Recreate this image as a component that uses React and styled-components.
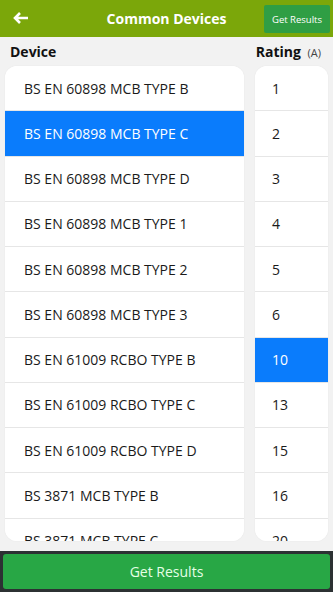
import React, { useState } from "react";
import styled, { createGlobalStyle } from "styled-components";

const GlobalStyle = createGlobalStyle`
  html, body {
    margin: 0;
    padding: 0;
    background: #f2f2f2;
    font-family: "Open Sans", "Noto Sans", sans-serif;
  }
`;

const devices = [
  "BS EN 60898 MCB TYPE B",
  "BS EN 60898 MCB TYPE C",
  "BS EN 60898 MCB TYPE D",
  "BS EN 60898 MCB TYPE 1",
  "BS EN 60898 MCB TYPE 2",
  "BS EN 60898 MCB TYPE 3",
  "BS EN 61009 RCBO TYPE B",
  "BS EN 61009 RCBO TYPE C",
  "BS EN 61009 RCBO TYPE D",
  "BS 3871 MCB TYPE B",
  "BS 3871 MCB TYPE C",
  "BS 3871 MCB TYPE D",
];

const ratings = [1, 2, 3, 4, 5, 6, 10, 13, 15, 16, 20, 25, 32];

const Page = styled.div`
  display: flex;
  flex-direction: column;
  width: 333px;
  height: 592px;
  overflow: hidden;
  background: #f2f2f2;
`;

const Header = styled.header`
  position: relative;
  display: flex;
  align-items: center;
  justify-content: center;
  height: 37px;
  background: #7ba70a;
  flex-shrink: 0;
`;

const Back = styled.span`
  position: absolute;
  left: 12px;
  top: 9px;
  display: flex;
`;

const Title = styled.h1`
  margin: 0;
  color: #ffffff;
  font-size: 14px;
  font-weight: 700;
`;

const HeadButton = styled.button`
  position: absolute;
  right: 3px;
  top: 5px;
  width: 66px;
  height: 28px;
  border: none;
  border-radius: 2px;
  background: #2f9e44;
  color: #ffffff;
  font-family: inherit;
  font-size: 9.5px;
  padding: 0;
`;

const Labels = styled.div`
  display: flex;
  justify-content: space-between;
  align-items: center;
  height: 29px;
  padding: 0 12px 0 10px;
  flex-shrink: 0;
`;

const Label = styled.span`
  font-size: 14px;
  font-weight: 700;
  color: #111;

  small {
    margin-left: 3px;
    font-size: 11px;
    font-weight: 400;
    color: #444;
  }
`;

const Lists = styled.div`
  display: flex;
  gap: 11px;
  padding: 0 5px;
  height: 475px;
  flex-shrink: 0;
`;

const Card = styled.div`
  width: ${(p) => p.$width}px;
  background: #ffffff;
  border-radius: 12px;
  overflow: hidden;
  box-shadow: 0 0 2px rgba(0, 0, 0, 0.06);
`;

const Row = styled.div`
  display: flex;
  align-items: center;
  height: 45.25px;
  flex-shrink: 0;
  box-sizing: border-box;
  padding-left: ${(p) => p.$pad}px;
  border-bottom: 1px solid #e6e6e6;
  background: ${(p) => (p.$active ? "#0a7cfc" : "#ffffff")};
  color: ${(p) => (p.$active ? "#ffffff" : "#1a1a1a")};
  font-size: 14px;
  white-space: nowrap;
  cursor: pointer;
`;

const Footer = styled.footer`
  margin-top: auto;
  height: 41px;
  background: #2c3133;
  padding: 3px;
  box-sizing: border-box;
  flex-shrink: 0;
`;

const MainButton = styled.button`
  width: 100%;
  height: 100%;
  border: none;
  border-radius: 3px;
  background: #28a745;
  color: #e6ffe6;
  font-family: inherit;
  font-size: 14px;
`;

export default function App() {
  const [device, setDevice] = useState(1);
  const [rating, setRating] = useState(6);

  return (
    <Page>
      <GlobalStyle />
      <Header>
        <Back>
          <svg width="18" height="18" viewBox="0 0 18 18">
            <path
              d="M16 9H3M8 4L3 9l5 5"
              stroke="#fff"
              strokeWidth="2.6"
              fill="none"
            />
          </svg>
        </Back>
        <Title>Common Devices</Title>
        <HeadButton>Get Results</HeadButton>
      </Header>
      <Labels>
        <Label>Device</Label>
        <Label>
          Rating <small>(A)</small>
        </Label>
      </Labels>
      <Lists>
        <Card $width={239}>
          {devices.map((d, i) => (
            <Row
              key={d}
              $pad={19}
              $active={i === device}
              onClick={() => setDevice(i)}
            >
              {d}
            </Row>
          ))}
        </Card>
        <Card $width={73}>
          {ratings.map((r, i) => (
            <Row
              key={r}
              $pad={17}
              $active={i === rating}
              onClick={() => setRating(i)}
            >
              {r}
            </Row>
          ))}
        </Card>
      </Lists>
      <Footer>
        <MainButton>Get Results</MainButton>
      </Footer>
    </Page>
  );
}
